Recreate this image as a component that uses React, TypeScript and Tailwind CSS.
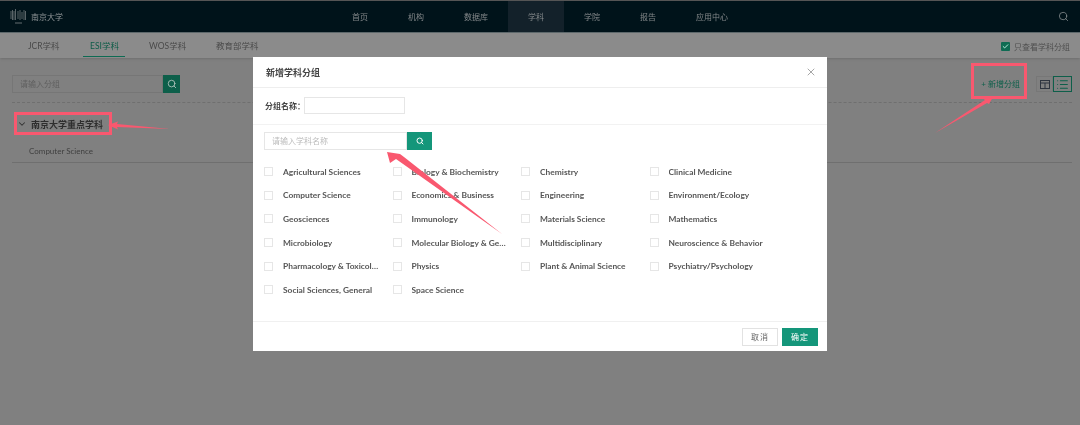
import React from "react";
import { Search, X, ChevronDown, Check, List } from "lucide-react";

const subjects = [
  "Agricultural Sciences", "Biology & Biochemistry", "Chemistry", "Clinical Medicine",
  "Computer Science", "Economics & Business", "Engineering", "Environment/Ecology",
  "Geosciences", "Immunology", "Materials Science", "Mathematics",
  "Microbiology", "Molecular Biology & Genetics", "Multidisciplinary", "Neuroscience & Behavior",
  "Pharmacology & Toxicology", "Physics", "Plant & Animal Science", "Psychiatry/Psychology",
  "Social Sciences, General", "Space Science",
];

const font = "font-['Lato','Noto_Sans_CJK_SC',sans-serif]";

function Logo() {
  return (
    <svg width="17" height="17" viewBox="0 0 17 17" className="text-[#7f8689]">
      <g stroke="currentColor" strokeWidth="0.7">
        <path d="M1 3v8M2.500 2v10M4 3v9M5.500 1v11M8 3v8M10 2v10M12 4v7M14 2v10M15.500 3v9" />
        <path d="M5 15h7" strokeWidth="0.8" />
      </g>
    </svg>
  );
}

function Arrows() {
  return (
    <svg className="absolute left-0 top-0 pointer-events-none" width="1080" height="425" viewBox="0 0 1080 425">
      <polygon fill="#f9586f" points="108,125 118,121.500 117,124 170,129 117,127 118,129.500" />
      <polygon fill="#f9586f" points="993,97 982,97.500 985,100 935,133 987,103 989,104" />
      <polygon fill="#f9586f" points="387,152 390,163 396,159 502,234 404,157 400,154" />
    </svg>
  );
}

export default function App() {
  return (
    <div className={`${font} relative w-[1080px] h-[425px] overflow-hidden bg-[#808080] text-[8px] leading-none blur-[0.5px]`}>
      <header className="flex items-center h-[33px] bg-[#00131a] border-b border-[#5f6a6d] border-t border-t-[#555]">
        <div className="flex items-center w-[332px] pl-[10px] gap-[4px]">
          <Logo />
          <span className="text-[#8f9597]">南京大学</span>
        </div>
        <nav className="flex h-full text-[#83888a]">
          {["首页", "机构", "数据库", "学科", "学院", "报告", "应用中心"].map((n) => (
            <div key={n} className={`flex items-center px-5 ${n === "学科" ? "bg-[#13212a]" : ""}`}>{n}</div>
          ))}
        </nav>
        <Search className="ml-auto mr-[11px] text-[#9a9fa1]" size={11} strokeWidth={1.5} />
      </header>

      <div className="flex items-center h-[25px] bg-[#8b8b8b] pl-[28px] pr-[10px] pt-[2px] text-[8.500px] text-[#4a4a4a] shadow-sm">
        <span className="w-[62px]">JCR学科</span>
        <span className="w-[59px] relative text-[#0e5c48]">
          ESI学科
          <span className="absolute left-[-7px] w-[42px] top-[14px] h-[1px] bg-[#0e6b53]" />
        </span>
        <span className="w-[67px]">WOS学科</span>
        <span>教育部学科</span>
        <div className="ml-auto flex items-center gap-[4px] text-[8px] text-[#4f4f4f]">
          <span className="flex items-center justify-center w-[9px] h-[9px] bg-[#0e6b53] rounded-[1px]">
            <Check size={7} strokeWidth={3} className="text-[#cfe]" />
          </span>
          只查看学科分组
        </div>
      </div>

      <div className="flex items-center ml-[12px] mr-[8px] h-[45px] pt-[8px] border-b border-dashed border-[#6f6f6f]">
        <div className="flex-none flex w-[168px] h-[18px]">
          <div className="flex-1 flex items-center pl-[7px] border border-[#767676] text-[#5f5f5f]">请输入分组</div>
          <div className="flex items-center justify-center w-[17px] bg-[#0d5f4a]">
            <Search size={10} className="text-[#b8c8c2]" />
          </div>
        </div>
        <div className="ml-auto flex items-center">
          <span className="text-[#0d5f4a] mr-[16px]">+ 新增分组</span>
          <div className="flex items-center justify-center w-[17px] h-[16px] border border-[#777]">
            <svg width="10" height="9" viewBox="0 0 10 9" fill="none" stroke="#2f3540" strokeWidth="1">
              <rect x="0.500" y="0.500" width="9" height="8" />
              <path d="M0.500 3h9M5 3v5.500" />
            </svg>
          </div>
          <div className="flex items-center justify-center w-[19px] h-[16px] border border-[#0d5f4a]">
            <List size={13} strokeWidth={2} className="text-[#0d5f4a]" />
          </div>
        </div>
      </div>

      <div className="ml-[12px] mr-[8px]">
        <div className="flex items-center h-[42px] pl-[5px] text-[9px] font-bold text-[#2e2e2e] gap-[4px]">
          <ChevronDown size={10} strokeWidth={2.500} className="text-[#333]" />
          南京大学重点学科
        </div>
        <div className="flex items-center h-[18px] pl-[17px] pb-[6px] border-b border-[#6f6f6f] text-[#3f3f3f]">
          Computer Science
        </div>
      </div>

      <div className="absolute left-[253px] top-[57px] w-[574px] h-[294px] bg-white flex flex-col">
        <div className="flex items-center justify-between h-[31px] pl-[13px] pr-[10px] border-b border-[#eeeeee] text-[9px] font-bold text-[#444]">
          新增学科分组
          <X size={12} strokeWidth={1.5} className="text-[#888]" />
        </div>
        <div className="flex items-center h-[37px] pl-[12px] pb-[1px] border-b border-[#f2f2f2] font-bold text-[#444]">
          分组名称：
          <div className="-ml-[1px] w-[101px] h-[17px] border border-[#e6e6e6]" />
        </div>
        <div className="flex h-[18px] mt-[7px] ml-[11px]">
          <div className="flex items-center w-[143px] pl-[7px] border border-[#e6e6e6] text-[#bbb]">请输入学科名称</div>
          <div className="flex items-center justify-center w-[25px] bg-[#14967a]">
            <Search size={8} strokeWidth={3} className="text-white" />
          </div>
        </div>
        <div className="grid grid-cols-[repeat(4,128.500px)] auto-rows-[23.600px] ml-[11px] mt-[10px]">
          {subjects.map((s) => (
            <div key={s} className="flex items-center min-w-0">
              <span className="flex-none w-[9px] h-[9px] border border-[#e6e6e6] mr-[10px]" />
              <span className="max-w-[97px] truncate text-[8.400px] leading-[12px] font-bold text-[#555]">{s}</span>
            </div>
          ))}
        </div>
        <div className="mt-auto flex items-center justify-end gap-[4px] h-[30px] pr-[9px] border-t border-[#f0f0f0]">
          <button className="w-[36px] h-[18px] border border-[#e2e2e2] text-[#666] tracking-[1px]">取消</button>
          <button className="w-[36px] h-[18px] bg-[#14967a] text-white tracking-[1px]">确定</button>
        </div>
      </div>

      <div className="absolute left-[14px] top-[112px] w-[98px] h-[23px] border-[3px] border-[#f9586f]" />
      <div className="absolute left-[971px] top-[63px] w-[56px] h-[36px] border-[3px] border-[#f9586f]" />
      <Arrows />
    </div>
  );
}
